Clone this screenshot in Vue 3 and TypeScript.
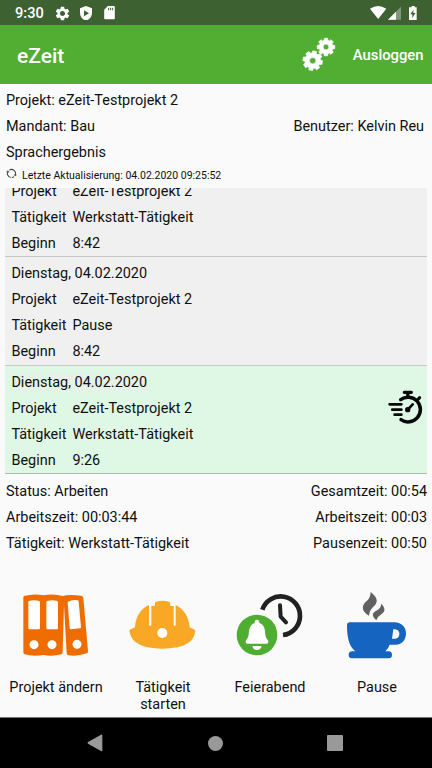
<script setup lang="ts">
interface Entry {
  date?: string
  project: string
  activity: string
  begin: string
  active?: boolean
}

const entries: Entry[] = [
  { project: 'eZeit-Testprojekt 2', activity: 'Werkstatt-Tätigkeit', begin: '8:42' },
  { date: 'Dienstag, 04.02.2020', project: 'eZeit-Testprojekt 2', activity: 'Pause', begin: '8:42' },
  { date: 'Dienstag, 04.02.2020', project: 'eZeit-Testprojekt 2', activity: 'Werkstatt-Tätigkeit', begin: '9:26', active: true },
]

const summary: [string, string][] = [
  ['Status: Arbeiten', 'Gesamtzeit: 00:54'],
  ['Arbeitszeit: 00:03:44', 'Arbeitszeit: 00:03'],
  ['Tätigkeit: Werkstatt-Tätigkeit', 'Pausenzeit: 00:50'],
]

// Eight-toothed gear outline around (cx, cy) with a round hole
function gear(cx: number, cy: number, outer: number, inner: number, hole: number, turn: number): string {
  const points: string[] = []
  for (let i = 0; i < 8; i++) {
    const a = (i * Math.PI) / 4 + turn
    const corners: [number, number][] = [[-0.27, inner], [-0.19, outer], [0.19, outer], [0.27, inner]]
    for (const [d, r] of corners) {
      points.push(`${(cx + r * Math.cos(a + d)).toFixed(2)} ${(cy + r * Math.sin(a + d)).toFixed(2)}`)
    }
  }
  return `M${points.join('L')}ZM${cx - hole} ${cy}a${hole} ${hole} 0 1 0 ${2 * hole} 0a${hole} ${hole} 0 1 0 ${-2 * hole} 0Z`
}

const bigGear = gear(11.7, 23.7, 9.9, 7.8, 3.2, 0.2)
const smallGear = gear(25, 10, 8.9, 6.9, 2.9, 0)
</script>

<template>
  <div class="screen">
    <header class="status-bar">
      <span class="clock">9:30</span>
      <svg class="st-gear" viewBox="0 0 24 24" fill="#fff">
        <path d="M19.14 12.94c.04-.3.06-.61.06-.94 0-.32-.02-.64-.07-.94l2.03-1.58c.18-.14.23-.41.12-.61l-1.92-3.32c-.12-.22-.37-.29-.59-.22l-2.39.96c-.5-.38-1.03-.7-1.62-.94l-.36-2.54c-.04-.24-.24-.41-.48-.41h-3.84c-.24 0-.43.17-.47.41l-.36 2.54c-.59.24-1.13.57-1.62.94l-2.39-.96c-.22-.08-.47 0-.59.22L2.74 8.87c-.12.21-.08.47.12.61l2.03 1.58c-.05.3-.09.63-.09.94s.02.64.07.94l-2.03 1.58c-.18.14-.23.41-.12.61l1.92 3.32c.12.22.37.29.59.22l2.39-.96c.5.38 1.03.7 1.62.94l.36 2.54c.05.24.24.41.48.41h3.84c.24 0 .44-.17.47-.41l.36-2.54c.59-.24 1.13-.56 1.62-.94l2.39.96c.22.08.47 0 .59-.22l1.92-3.32c.12-.22.07-.47-.12-.61l-2.01-1.58zM12 15.6c-1.98 0-3.6-1.62-3.6-3.6s1.62-3.6 3.6-3.6 3.6 1.62 3.6 3.6-1.62 3.6-3.6 3.6z" />
      </svg>
      <svg class="st-shield" viewBox="0 0 36 44" fill="#fff" fill-rule="evenodd">
        <path d="M18 0L36 7V21C36 32 28 41 18 44C8 41 0 32 0 21V7ZM12 13V31L27 22Z" />
      </svg>
      <svg class="st-card" viewBox="0 0 32 40" fill="#fff" fill-rule="evenodd">
        <path d="M11 0H29Q32 0 32 3V37Q32 40 29 40H3Q0 40 0 37V11ZM12 5V13H15V5ZM18 5V13H21V5ZM24 5V13H27V5Z" />
      </svg>
      <span class="spacer"></span>
      <svg class="st-signals" viewBox="0 0 144 44" fill="#fff">
        <path d="M0 8Q24 -8 49 8L24.500 39Z" />
        <path d="M93 2V41H54Z" opacity=".35" />
        <path d="M78 17V41H54Z" />
        <path fill-rule="evenodd" d="M125 0H134V4H140V42H117V4H125ZM130 11L121 25H127V36L136 21H130Z" />
      </svg>
    </header>

    <div class="app-bar">
      <h1>eZeit</h1>
      <span class="spacer"></span>
      <svg class="gears" viewBox="0 0 36 36" fill="#fff" fill-rule="evenodd" stroke="#fff" stroke-width=".7" stroke-linejoin="round">
        <path :d="bigGear" />
        <path :d="smallGear" />
      </svg>
      <span class="logout">Ausloggen</span>
    </div>

    <section class="info">
      <div class="line"><span>Projekt: eZeit-Testprojekt 2</span></div>
      <div class="line"><span>Mandant: Bau</span><span class="user">Benutzer: Kelvin Reu</span></div>
      <div class="line"><span>Sprachergebnis</span></div>
      <div class="update">
        <svg viewBox="0 0 30 30" fill="none" stroke="#444" stroke-width="2.800">
          <path d="M13 25.800A11 11 0 0 1 6 8.500M9 5.800A11 11 0 0 1 24.500 20.500M22 23.400A11 11 0 0 1 16 26" />
          <path d="M1 10L6 8L8 13M22 17L24.500 21.500L29 19" stroke-width="2" />
        </svg>
        <span>Letzte Aktualisierung: 04.02.2020 09:25:52</span>
      </div>
    </section>

    <section class="list">
      <article v-for="(e, i) in entries" :key="i" class="entry" :class="{ active: e.active }">
        <div v-if="e.date" class="date"><span>{{ e.date }}</span></div>
        <dl>
          <dt>Projekt</dt><dd>{{ e.project }}</dd>
          <dt>Tätigkeit</dt><dd>{{ e.activity }}</dd>
          <dt>Beginn</dt><dd>{{ e.begin }}</dd>
        </dl>
        <svg v-if="e.active" class="stopwatch" viewBox="51 117 108 108" fill="none" stroke="#080808" stroke-linecap="round">
          <path d="M92 149A37 37 0 1 1 93 209" stroke-width="10.500" />
          <path d="M103 127H124M113.500 128V139" stroke-width="10" />
          <path d="M143 149L149 143" stroke-width="9" />
          <path d="M59 163H94M67 179H94M74 194H94" stroke-width="8.500" />
          <path d="M114 178L128 163" stroke-width="8" />
          <circle cx="113" cy="179" r="5" fill="#080808" stroke-width="6" />
        </svg>
      </article>
    </section>

    <section class="summary">
      <div v-for="(s, i) in summary" :key="i" class="line"><span>{{ s[0] }}</span><span>{{ s[1] }}</span></div>
    </section>

    <nav class="actions">
      <button type="button">
        <svg viewBox="60 27 216 216">
          <path fill="#ef6c00" d="M72 48Q101 40 130 46Q160 40 188 48Q205 43 244 47Q249 48 250 54L264 213Q265 218 260 220Q230 230 206 226Q201 226 200 220L192 75L188 216Q188 221 184 223Q157 230 130 225Q102 230 74 223Q70 221 70 217V54Q70 50 72 48Z" />
          <path fill="#fff" d="M86 63Q101 58 118 63Q120 64 120 67V145Q120 148 117 148H88Q85 148 85 145V67Q85 64 86 63ZM141 63Q157 58 172 63Q174 64 174 67V145Q174 148 171 148H142Q139 148 139 145V67Q139 64 141 63ZM204 65Q218 57 234 61Q236 62 236 65L243 142Q243 145 240 145L212 148Q209 148 209 145L203 68Q203 66 204 65Z" />
          <g fill="#fff"><circle cx="102" cy="194" r="13.500" /><circle cx="156" cy="194" r="13.500" /><circle cx="231" cy="193" r="13.500" /></g>
        </svg>
        <span>Projekt ändern</span>
      </button>
      <button type="button">
        <svg viewBox="51 27 216 216">
          <path fill="#f9a825" d="M58 154Q58 148 64 147L75 142C77 109 92 86 117 75V134Q117 137 121 137Q124 137 124 134V78H131Q135 78 135 74V68Q135 66 138 65Q157 60 177 65Q180 66 180 68V74Q180 78 184 78H191V134Q191 137 194 137Q197 137 197 134V75C222 88 237 110 239 142L250 147Q256 149 256 154Q252 179 234 189C203 211 112 212 81 189Q64 180 58 154Z" />
          <circle cx="157" cy="159" r="15" fill="#fff" />
        </svg>
        <span>Tätigkeit starten</span>
      </button>
      <button type="button">
        <svg viewBox="42 27 216 216">
          <path d="M127 89A58 58 0 1 1 189 165" fill="none" stroke="#212121" stroke-width="14" />
          <path d="M180 76L182 110L198 127" fill="none" stroke="#212121" stroke-width="12" stroke-linecap="round" stroke-linejoin="round" />
          <circle cx="111" cy="165" r="61" fill="#4fae32" />
          <path fill="#fff" d="M104 129V127Q104 119 111 119Q118 119 118 127V129Q133 134 135 153C136 170 138 174 144 181Q147 191 140 191H82Q75 191 78 181C84 174 86 170 87 153Q90 133 104 129ZM97 198H125Q122 210 111 210Q100 210 97 198Z" />
        </svg>
        <span>Feierabend</span>
      </button>
      <button type="button">
        <svg viewBox="48 27 216 216">
          <path fill="#616161" d="M137 36C160 54 160 69 144 81Q133 92 132 107C112 96 108 80 121 67Q137 55 137 36ZM169 71C181 84 182 93 170 102Q158 109 154 121C140 108 141 100 152 93Q168 86 169 71Z" />
          <path fill="#1565c0" fill-rule="evenodd" d="M66 136Q66 127 75 127H209C227 127 243 140 243 159C243 180 231 194 213 194H194Q190 206 181 214H191Q201 214 201 225Q201 235 191 235H81Q71 235 71 225Q71 214 81 214H91C70 199 66 165 66 136ZM205 148L201 176H207C218 176 223 170 223 161C223 152 216 148 205 148Z" />
        </svg>
        <span>Pause</span>
      </button>
    </nav>

    <footer class="nav-bar">
      <svg viewBox="0 0 48 54" class="back"><path d="M2 27Q1 25 3 24L42 2Q46 0 46 4V49Q46 53 42 51L3 29Z" fill="#999" /></svg>
      <span class="home"></span>
      <span class="recent"></span>
    </footer>
  </div>
</template>

<style>
body {
  margin: 0;
  background: #fafafa;
}
</style>

<style scoped>
.screen {
  width: 432px;
  height: 768px;
  display: flex;
  flex-direction: column;
  overflow: hidden;
  background: #fafafa;
  color: #101010;
  font: 14.45px/26px Roboto, sans-serif;
}
svg {
  display: block;
  flex: none;
}
.spacer {
  flex: 1;
}
.status-bar {
  height: 25px;
  flex: none;
  display: flex;
  align-items: center;
  box-sizing: border-box;
  padding: 1px 14.5px 0 15px;
  background: #3d6131;
  color: #fff;
}
.clock {
  width: 39px;
  font-size: 14.6px;
  font-weight: 500;
}
.st-gear {
  width: 17px;
  height: 17px;
}
.st-shield {
  width: 12px;
  height: 14.7px;
  margin-left: 9px;
}
.st-card {
  width: 11px;
  height: 13.3px;
  margin-left: 12px;
}
.st-signals {
  width: 48px;
  height: 14.7px;
}
.app-bar {
  height: 59px;
  flex: none;
  display: flex;
  align-items: center;
  box-sizing: border-box;
  padding: 1px 8.5px 0 17px;
  background: #52ae32;
  color: #fff;
}
h1 {
  margin: 1px 0 0;
  font-size: 21px;
  font-weight: 500;
}
.gears {
  width: 36px;
  height: 36px;
  margin-right: 16px;
}
.logout {
  font-size: 14.8px;
  font-weight: 500;
}
.info {
  height: 104px;
  flex: none;
  box-sizing: border-box;
  padding: 4px 8px 0 6px;
}
.line {
  display: flex;
  justify-content: space-between;
}
.update {
  display: flex;
  height: 22px;
  line-height: 20px;
  font-size: 10.5px;
}
.update svg {
  width: 11px;
  height: 11px;
  margin: 1.5px 5px 0 0;
}
.list {
  height: 286px;
  flex: none;
  display: flex;
  flex-direction: column;
  justify-content: flex-end;
  overflow: hidden;
  margin: 0 5px 0 5.4px;
}
.entry {
  position: relative;
  flex: none;
  height: 108.4px;
  box-sizing: border-box;
  padding: 4px 6px 0;
  background: #f0f0f0;
  border-bottom: 1px solid #c8c8c8;
}
.entry:first-child {
  height: 82.4px;
}
.entry.active {
  background: #dff7e5;
  border-bottom-color: #a8bdac;
}
.active .date span {
  background: #e6f2e8;
}
dl {
  display: grid;
  grid-template-columns: 61px 1fr;
  margin: 0;
}
dd {
  margin: 0;
}
.stopwatch {
  position: absolute;
  right: 4px;
  top: 23px;
  width: 36px;
  height: 36px;
}
.summary {
  height: 91px;
  flex: none;
  box-sizing: border-box;
  padding: 5px 5px 0 6px;
}
.actions {
  flex: 1;
  display: grid;
  grid-template-columns: repeat(4, 107px);
  padding: 24px 0 0 2.5px;
}
button {
  display: flex;
  flex-direction: column;
  align-items: center;
  gap: 18px;
  padding: 0 15px;
  border: 0;
  background: none;
  color: inherit;
  font: 14.45px/17px Roboto, sans-serif;
}
button:first-child {
  padding: 0;
}
button svg {
  width: 72px;
  height: 72px;
}
.nav-bar {
  height: 51px;
  flex: none;
  display: flex;
  align-items: center;
  justify-content: space-between;
  box-sizing: border-box;
  padding: 0 89px 0 87px;
  background: #000;
  border-top: 1px solid #777;
}
.back {
  width: 16px;
  height: 18px;
}
.home {
  width: 15px;
  height: 15px;
  border-radius: 50%;
  background: #999;
}
.recent {
  width: 16px;
  height: 16px;
  border-radius: 1px;
  background: #999;
}
</style>
